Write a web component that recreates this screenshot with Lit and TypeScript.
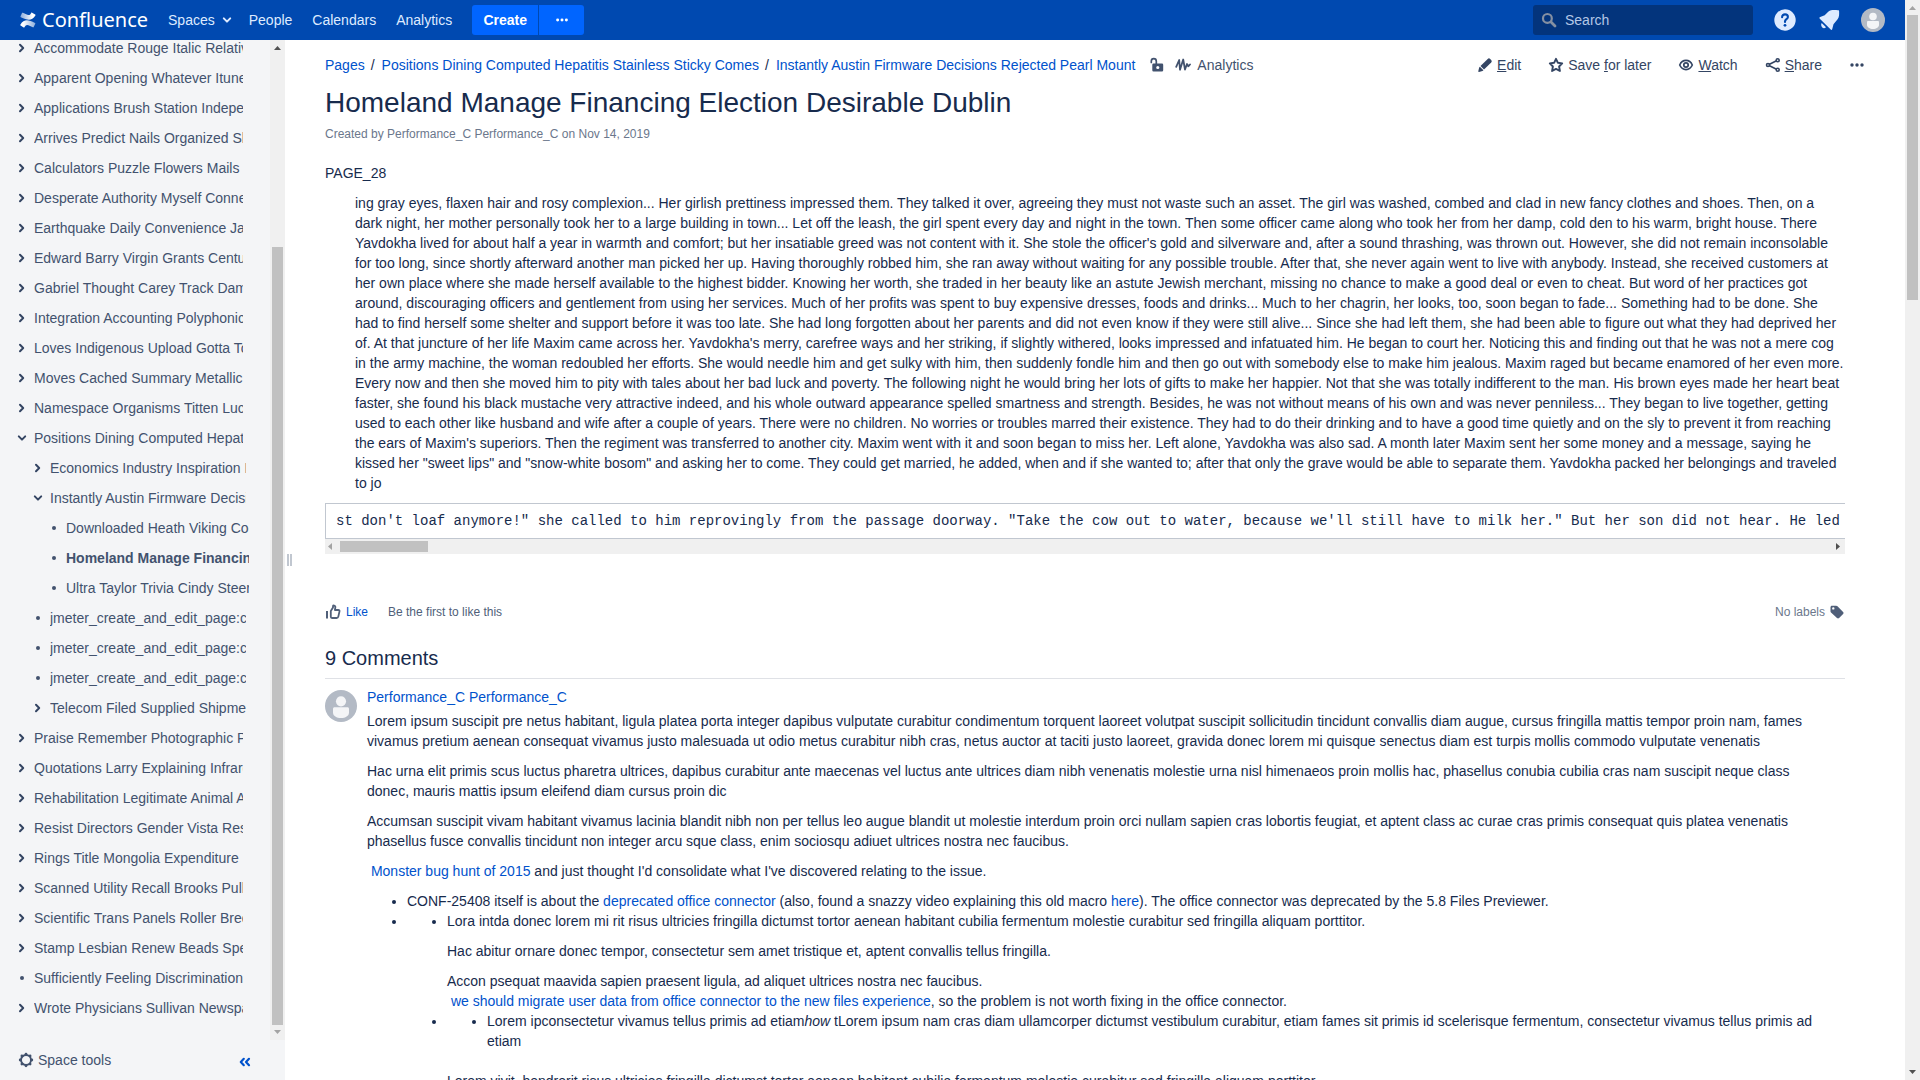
import { LitElement, html, css, svg, nothing, TemplateResult } from "lit";
import { customElement, property } from "lit/decorators.js";

type PageNode = {
  title: string;
  state: "closed" | "open" | "leaf";
  current?: boolean;
  children?: PageNode[];
};

const closed = (title: string): PageNode => ({ title, state: "closed" });
const leaf = (title: string, current = false): PageNode => ({ title, state: "leaf", current });

const PAGES: PageNode[] = [
  closed("Accommodate Rouge Italic Relative"),
  closed("Apparent Opening Whatever Itunes"),
  closed("Applications Brush Station Independent"),
  closed("Arrives Predict Nails Organized Slides"),
  closed("Calculators Puzzle Flowers Mails"),
  closed("Desperate Authority Myself Connect"),
  closed("Earthquake Daily Convenience Japan"),
  closed("Edward Barry Virgin Grants Century"),
  closed("Gabriel Thought Carey Track Damage"),
  closed("Integration Accounting Polyphonic"),
  closed("Loves Indigenous Upload Gotta Together"),
  closed("Moves Cached Summary Metallic"),
  closed("Namespace Organisms Titten Lucky"),
  {
    title: "Positions Dining Computed Hepatitis",
    state: "open",
    children: [
      closed("Economics Industry Inspiration Resort"),
      {
        title: "Instantly Austin Firmware Decisions",
        state: "open",
        children: [
          leaf("Downloaded Heath Viking Cooking"),
          leaf("Homeland Manage Financing", true),
          leaf("Ultra Taylor Trivia Cindy Steering"),
        ],
      },
      leaf("jmeter_create_and_edit_page:create"),
      leaf("jmeter_create_and_edit_page:create"),
      leaf("jmeter_create_and_edit_page:create"),
      closed("Telecom Filed Supplied Shipment"),
    ],
  },
  closed("Praise Remember Photographic Print"),
  closed("Quotations Larry Explaining Infrared"),
  closed("Rehabilitation Legitimate Animal Arts"),
  closed("Resist Directors Gender Vista Rest"),
  closed("Rings Title Mongolia Expenditure"),
  closed("Scanned Utility Recall Brooks Pulled"),
  closed("Scientific Trans Panels Roller Breed"),
  closed("Stamp Lesbian Renew Beads Special"),
  leaf("Sufficiently Feeling Discrimination"),
  closed("Wrote Physicians Sullivan Newspaper"),
];

const icon = (body: TemplateResult, size = 16, box = 16) =>
  html`<svg class="icon" width=${size} height=${size} viewBox="0 0 ${box} ${box}" fill="none" stroke="currentColor" aria-hidden="true">${body}</svg>`;

const icons = {
  right: svg`<path d="M4 2.8 7.2 6 4 9.2" stroke-width="2" stroke-linejoin="round" stroke-linecap="round"/>`,
  down: svg`<path d="M2.8 4.4 6 7.6 9.2 4.4" stroke-width="2" stroke-linejoin="round" stroke-linecap="round"/>`,
  dot: svg`<circle cx="6" cy="6" r="2" fill="currentColor" stroke="none"/>`,
  more: svg`<g fill="currentColor" stroke="none"><circle cx="3" cy="8" r="1.7"/><circle cx="8" cy="8" r="1.7"/><circle cx="13" cy="8" r="1.7"/></g>`,
  search: svg`<circle cx="6.4" cy="6.4" r="4.4" stroke-width="2.2"/><path d="m10 10 4 4" stroke-width="2.8" stroke-linecap="round"/>`,
  edit: svg`<g fill="currentColor" stroke="none"><path d="M10.700 1.900a1.800 1.800 0 0 1 2.500 0l1 1a1.800 1.800 0 0 1 0 2.500L7 12.600 3.500 9.100z"/><path d="M2.900 9.700 6.400 13.200c-.2.400-.6.700-1 .8l-3.400.9c-.5.100-.8-.2-.7-.7l.8-3.500c.1-.4.400-.8.800-1z"/></g>`,
  star: svg`<path d="m8 1.800 1.900 4 4.300.6-3.100 3.100.8 4.500L8 11.900 4.100 14l.8-4.500L1.800 6.400l4.300-.6z" stroke-width="1.900" stroke-linejoin="round"/>`,
  watch: svg`<path d="M1.700 8C3 5 5.300 3.400 8 3.400S13 5 14.300 8C13 11 10.700 12.600 8 12.600S3 11 1.700 8z" stroke-width="1.600"/><circle cx="8" cy="8" r="2.200" stroke-width="1.700"/>`,
  share: svg`<path d="m4 7.500 7.500-3.700M4 8.500l7.500 3.800" stroke-width="1.600"/><g stroke-width="1.600"><circle cx="3" cy="8" r="1.500"/><circle cx="12.700" cy="3.300" r="1.500"/><circle cx="12.700" cy="12.700" r="1.500"/></g>`,
  unlock: svg`<path d="M2.300 5.500V4.200a2.500 2.500 0 0 1 5 0V7" stroke-width="1.700" stroke-linecap="round"/><path fill="currentColor" stroke="none" fill-rule="evenodd" d="M4.500 6.500h8.500a1.200 1.200 0 0 1 1.200 1.200v5.600a1.200 1.200 0 0 1-1.200 1.200H4.500a1.200 1.200 0 0 1-1.200-1.200V7.700a1.200 1.200 0 0 1 1.200-1.200zM8.800 8.900a1.600 1.600 0 1 0 0 3.200 1.600 1.600 0 0 0 0-3.200z"/>`,
  pulse: svg`<path d="M1.200 9.800 4.200 3l.8 9.800L8.200 2.500l1.800 10 2-5.500 1.300 2.300L15 7.500" stroke-width="1.800" stroke-linejoin="round" stroke-linecap="round"/>`,
  like: svg`<path d="M5.800 7 8 3.500V1.900c.2-.7 2.200-.6 2.400 1L9.900 6h3.400c.9 0 1.400.6 1.200 1.400l-1.200 5.200c-.2.800-.8 1.400-1.700 1.400H7c-.7 0-1.200-.5-1.200-1.200z" stroke-width="1.800" stroke-linejoin="round"/><path d="M2 7v7.500" stroke-width="2"/>`,
  tag: svg`<path fill="currentColor" stroke="none" fill-rule="evenodd" d="M1.500 3.200c0-.9.600-1.500 1.500-1.500h4.200c.5 0 1 .2 1.300.5l5.600 5.700c.6.600.6 1.500 0 2.100l-4 4c-.6.600-1.500.6-2.100 0L2 8.500c-.3-.4-.5-.8-.5-1.300zM4.300 3.200a1.200 1.200 0 1 0 0 2.400 1.200 1.200 0 0 0 0-2.400z"/>`,
  gear: svg`<circle cx="8" cy="8" r="5" stroke-width="1.900"/><g fill="currentColor" stroke="none"><circle cx="8" cy="2.200" r="1.400"/><circle cx="8" cy="13.800" r="1.400"/><circle cx="2.200" cy="8" r="1.400"/><circle cx="13.800" cy="8" r="1.400"/><circle cx="3.900" cy="3.900" r="1.400"/><circle cx="12.100" cy="3.900" r="1.400"/><circle cx="3.900" cy="12.100" r="1.400"/><circle cx="12.100" cy="12.100" r="1.400"/></g>`,
  collapse: svg`<path d="M6.800 4.800 3.800 8l3 3.200M12 4.800 9 8l3 3.200" stroke-width="2.200" stroke-linejoin="round" stroke-linecap="round"/>`,
  help: svg`<circle cx="12" cy="12" r="10.700" fill="currentColor" stroke="none"/><path d="M9.100 9.300c0-1.900 1.300-2.900 2.900-2.900s2.900 1 2.900 2.500c0 2.200-2.900 2.300-2.900 4.600v.5" stroke="#0049b0" stroke-width="2.100" stroke-linecap="round"/><circle cx="12" cy="17.300" r="1.400" fill="#0049b0" stroke="none"/>`,
  notify: svg`<g fill="currentColor" stroke="none"><path d="M21 2.200c.7-.2 1.200.3 1.100 1 .1 3 .3 5.800-1.500 8l-4.100 5-1.300 5c-.2.800-.9 1-1.500.4L2.800 10.700c-.6-.6-.4-1.300.4-1.600l4.500-1.900 3.800-3.600C13.800 1.600 17.500 2.200 21 2.200z"/><path d="M4.700 15 9 19.200c-1.200 1.200-2.700 1.200-3.700.2s-1.700-3-.6-4.400z"/></g>`,
  avatar: svg`<circle cx="12" cy="12" r="12" fill="#b3bac5" stroke="none"/><circle cx="12" cy="8.500" r="3.800" fill="#f4f5f7" stroke="none"/><path d="M6 14.200c0-.7.500-1.200 1.200-1.200h9.600c.7 0 1.200.5 1.200 1.200V17c0 2.300-2.700 4-6 4s-6-1.700-6-4z" fill="#f4f5f7" stroke="none"/>`,
};

const sheet = css`
  * { box-sizing: border-box; }
  a { color: #0052cc; text-decoration: none; }
  button { font: inherit; color: inherit; background: none; border: 0; padding: 0; margin: 0; cursor: pointer; }
  ul { list-style: none; margin: 0; padding: 0; }
  .icon { display: block; flex: none; }
`;

/* Static scroll track with arrows at both ends. */
@customElement("scroll-track")
class ScrollTrack extends LitElement {
  @property({ type: Boolean, reflect: true }) horizontal = false;
  @property({ type: Number }) before = 0;
  @property({ type: Number }) thumb = 0;
  @property({ type: Boolean }) startActive = false;
  @property({ type: Boolean }) endActive = false;

  static styles = css`
    :host { display: flex; flex-direction: column; flex: none; width: 15px; background: #f0f0f0; }
    :host([horizontal]) { flex-direction: row; width: auto; height: 15px; }
    .arrow { display: block; flex: none; }
    .track { flex: 1; display: flex; flex-direction: inherit; min-width: 0; min-height: 0; padding: 0 2px; }
    :host([horizontal]) .track { padding: 2px 0; }
    .thumb { background: #c1c1c1; flex: none; }
  `;

  private arrow(d: string, active: boolean) {
    return html`<svg class="arrow" width="15" height="15" viewBox="0 0 15 15" aria-hidden="true"><path d=${d} fill=${active ? "#505050" : "#a3a3a3"} /></svg>`;
  }

  render() {
    const h = this.horizontal;
    return html`
      ${this.arrow(h ? "M3 7.500 7 4v7z" : "M7.500 6 11 10H4z", this.startActive)}
      <div class="track">
        <div style="flex:none;flex-basis:${this.before}%"></div>
        <div class="thumb" style="flex-basis:${this.thumb}%"></div>
      </div>
      ${this.arrow(h ? "M10 7.500 6 4v7z" : "M7.500 9 11 5H4z", this.endActive)}
    `;
  }
}

@customElement("site-header")
class SiteHeader extends LitElement {
  static styles = [
    sheet,
    css`
      :host { display: flex; align-items: center; flex: none; height: 40px; padding: 0 20px; background: #0049b0; color: #deebff; }
      .logo { display: flex; align-items: center; gap: 6px; color: #fff; font: 20px/30px "Noto Sans", sans-serif; margin-right: 20px; }
      nav { display: flex; align-items: center; gap: 20px; }
      nav a { color: inherit; display: flex; align-items: center; gap: 6px; }
      .menu { margin-right: -4px; }
      .create { display: flex; gap: 1px; margin-left: 20px; color: #fff; }
      .create button { height: 30px; background: #0065ff; }
      .main { width: 66px; font-weight: bold; border-radius: 3px 0 0 3px; }
      .more { width: 45px; display: grid; place-items: center; border-radius: 0 3px 3px 0; }
      .tools { display: flex; align-items: center; gap: 20px; margin-left: auto; }
      .search { display: flex; align-items: center; width: 220px; height: 30px; padding: 0 8px; gap: 8px; border-radius: 3px; background: #03347c; color: #8590a2; }
      .search input { flex: 1; min-width: 0; border: 0; padding: 0; outline: 0; background: none; color: #deebff; font: inherit; }
      .search input::placeholder { color: #b3c7e6; opacity: 1; }
    `,
  ];

  render() {
    return html`
      <a class="logo" href="#">
        <svg class="icon" width="16" height="18" viewBox="0 0 16 18" aria-hidden="true">
          <defs>
            <linearGradient id="top" x1="1" y1="0" x2="0" y2="0"><stop offset="0.2" stop-color="#fff" /><stop offset="1" stop-color="#fff" stop-opacity=".55" /></linearGradient>
            <linearGradient id="low" x1="0" y1="0" x2="1" y2="0"><stop offset="0.2" stop-color="#fff" /><stop offset="1" stop-color="#fff" stop-opacity=".55" /></linearGradient>
          </defs>
          <path fill="url(#low)" d="M.3 13.700c-.2.400-.1.700.3.900l3 1.800c.4.200.7.100.9-.2 1.600-2.600 2.500-2.700 5.600-1.200l2.700 1.300c.4.200.7 0 .9-.3l1.600-3.200c.2-.4 0-.7-.3-.9C8.200 8.700 4.300 7.700.3 13.700z" />
          <path fill="url(#top)" d="M15.400 4.400c.2-.4.100-.7-.2-.9l-3.100-1.800c-.4-.2-.7-.1-.9.2-1.600 2.600-2.500 2.700-5.600 1.200L2.900 1.800c-.4-.2-.7 0-.9.300L.5 5.300c-.2.400 0 .7.300.9 6.800 3.200 10.700 4.200 14.600-1.800z" />
        </svg>
        <span>Confluence</span>
      </a>
      <nav aria-label="Site">
        <a class="menu" href="#">Spaces ${icon(icons.down, 12, 12)}</a>
        <a href="#">People</a>
        <a href="#">Calendars</a>
        <a href="#">Analytics</a>
      </nav>
      <div class="create">
        <button class="main">Create</button>
        <button class="more" aria-label="Create from template">${icon(icons.more, 14)}</button>
      </div>
      <div class="tools">
        <label class="search">${icon(icons.search)}<input type="text" aria-label="Search" placeholder="Search" /></label>
        <button aria-label="Help">${icon(icons.help, 24, 24)}</button>
        <button aria-label="Notifications">${icon(icons.notify, 24, 24)}</button>
        <button aria-label="Profile">${icon(icons.avatar, 24, 24)}</button>
      </div>
    `;
  }
}

@customElement("space-sidebar")
class SpaceSidebar extends LitElement {
  static styles = [
    sheet,
    css`
      :host { display: flex; flex-direction: column; flex: none; width: 285px; background: #f4f5f7; color: #42526e; }
      .scroller { display: flex; flex: 1; min-height: 0; }
      nav { flex: 1; min-width: 0; overflow: hidden; padding: 0 27px 0 16px; }
      .tree { margin-top: -7px; }
      .tree ul { padding-left: 16px; margin-right: -3px; }
      .row { display: flex; align-items: center; gap: 6px; height: 30px; }
      .row a { flex: 1; min-width: 0; overflow: hidden; white-space: nowrap; color: inherit; line-height: 20px; }
      .row button { color: #344563; }
      .current { font-weight: bold; }
      footer { display: flex; align-items: center; justify-content: space-between; height: 40px; padding: 0 32px 0 18px; }
      .tools { display: flex; align-items: center; gap: 4px; }
      .collapse { color: #0052cc; padding-top: 4px; }
    `,
  ];

  private node(n: PageNode): TemplateResult {
    const marker = n.state === "leaf"
      ? icon(icons.dot, 12, 12)
      : html`<button aria-label=${n.state === "open" ? "Collapse" : "Expand"}>${icon(n.state === "open" ? icons.down : icons.right, 12, 12)}</button>`;
    return html`<li>
      <div class="row">${marker}<a href="#" class=${n.current ? "current" : ""}>${n.title}</a></div>
      ${n.children ? html`<ul>${n.children.map((c) => this.node(c))}</ul>` : nothing}
    </li>`;
  }

  render() {
    return html`
      <div class="scroller">
        <nav aria-label="Page tree"><ul class="tree">${PAGES.map((n) => this.node(n))}</ul></nav>
        <scroll-track .before=${19.8} .thumb=${80.2} .startActive=${true}></scroll-track>
      </div>
      <footer>
        <button class="tools">${icon(icons.gear)}<span>Space tools</span></button>
        <button class="collapse" aria-label="Collapse sidebar">${icon(icons.collapse)}</button>
      </footer>
    `;
  }
}

@customElement("page-view")
class PageView extends LitElement {
  static styles = [
    sheet,
    css`
      :host { display: block; flex: 1; min-width: 0; overflow: hidden; padding: 15px 40px 0 33px; background: #fff; }
      .bar { display: flex; align-items: center; justify-content: space-between; height: 20px; }
      .crumbs, .crumbs ol, .actions, .meta { display: flex; align-items: center; }
      .crumbs ol { list-style: none; margin: 0; padding: 0; }
      .crumbs li + li::before { content: "/"; padding: 0 7px 0 6px; }
      .crumbs button { display: flex; align-items: center; gap: 6px; color: #42526e; }
      .lock { margin-left: 14px; }
      .stats { margin-left: 10px; }
      .actions { gap: 27px; color: #344563; }
      .actions button { display: flex; align-items: center; gap: 4px; white-space: nowrap; }
      .content { margin-right: 20px; }
      h1 { margin: 12px 0 0; font-size: 28px; font-weight: normal; line-height: 32px; }
      .byline { margin: 5px 0 0; font-size: 12px; line-height: 20px; color: #6b778c; }
      .byline a { color: inherit; }
      p { margin: 10px 0 0; }
      .lead { margin-top: 19px; }
      blockquote { margin: 10px 0 0 30px; }
      pre { margin: 10px 0 0; height: 36px; padding: 7px 10px; overflow: hidden; border: 1px solid #c1c7d0; border-right: 0; font: 14px/20px "Liberation Mono", monospace; }
      .meta { justify-content: space-between; height: 20px; margin-top: 48px; font-size: 12px; color: #505f79; }
      .likes { display: flex; align-items: center; gap: 20px; }
      .likes button, .labels { display: flex; align-items: center; gap: 4px; }
      .likes button { gap: 5px; }
      .likes button span { color: #0052cc; }
      .labels { color: #6b778c; }
      .labels button { color: #505f79; }
      h2 { margin: 24px 0 0; padding-bottom: 8px; border-bottom: 1px solid #dfe1e6; font-size: 20px; font-weight: normal; line-height: 24px; }
      .comment { display: flex; gap: 10px; padding-top: 8px; }
      .comment > .icon { margin-top: 3px; }
      .body { flex: 1; min-width: 0; padding-right: 20px; }
      .author { display: block; }
      .author + p { margin-top: 4px; }
      .body ul { list-style: disc; padding-left: 40px; }
      .body > ul { margin-top: 10px; }
      .last { margin-top: 20px; }
    `,
  ];

  render() {
    return html`
      <div class="bar">
        <div class="crumbs">
          <ol>
            <li><a href="#">Pages</a></li>
            <li><a href="#">Positions Dining Computed Hepatitis Stainless Sticky Comes</a></li>
            <li><a href="#">Instantly Austin Firmware Decisions Rejected Pearl Mount</a></li>
          </ol>
          <button class="lock" aria-label="Unrestricted">${icon(icons.unlock)}</button>
          <button class="stats">${icon(icons.pulse)}<span>Analytics</span></button>
        </div>
        <div class="actions">
          <button>${icon(icons.edit)}<span><u>E</u>dit</span></button>
          <button>${icon(icons.star)}<span>Save <u>f</u>or later</span></button>
          <button>${icon(icons.watch)}<span><u>W</u>atch</span></button>
          <button>${icon(icons.share)}<span><u>S</u>hare</span></button>
          <button aria-label="More actions">${icon(icons.more)}</button>
        </div>
      </div>
      <div class="content">
        <h1>Homeland Manage Financing Election Desirable Dublin</h1>
        <p class="byline">Created by <a href="#">Performance_C Performance_C</a> on <a href="#">Nov 14, 2019</a></p>
        <p class="lead">PAGE_28</p>
        <blockquote>ing gray eyes, flaxen hair and rosy complexion... Her girlish prettiness impressed them. They talked it over, agreeing they must not waste such an asset. The girl was washed, combed and clad in new fancy clothes and shoes. Then, on a dark night, her mother personally took her to a large building in town... Let off the leash, the girl spent every day and night in the town. Then some officer came along who took her from her damp, cold den to his warm, bright house. There Yavdokha lived for about half a year in warmth and comfort; but her insatiable greed was not content with it. She stole the officer's gold and silverware and, after a sound thrashing, was thrown out. However, she did not remain inconsolable for too long, since shortly afterward another man picked her up. Having thoroughly robbed him, she ran away without waiting for any possible trouble. After that, she never again went to live with anybody. Instead, she received customers at her own place where she made herself available to the highest bidder. Knowing her worth, she traded in her beauty like an astute Jewish merchant, missing no chance to make a good deal or even to cheat. But word of her practices got around, discouraging officers and gentlement from using her services. Much of her profits was spent to buy expensive dresses, foods and drinks... Much to her chagrin, her looks, too, soon began to fade... Something had to be done. She had to find herself some shelter and support before it was too late. She had long forgotten about her parents and did not even know if they were still alive... Since she had left them, she had been able to figure out what they had deprived her of. At that juncture of her life Maxim came across her. Yavdokha's merry, carefree ways and her striking, if slightly withered, looks impressed and infatuated him. He began to court her. Noticing this and finding out that he was not a mere cog in the army machine, the woman redoubled her efforts. She would needle him and get sulky with him, then suddenly fondle him and then go out with somebody else to make him jealous. Maxim raged but became enamored of her even more. Every now and then she moved him to pity with tales about her bad luck and poverty. The following night he would bring her lots of gifts to make her happier. Not that she was totally indifferent to the man. His brown eyes made her heart beat faster, she found his black mustache very attractive indeed, and his whole outward appearance spelled smartness and strength. Besides, he was not without means of his own and was never penniless... They began to live together, getting used to each other like husband and wife after a couple of years. There were no children. No worries or troubles marred their existence. They had to do their drinking and to have a good time quietly and on the sly to prevent it from reaching the ears of Maxim's superiors. Then the regiment was transferred to another city. Maxim went with it and soon began to miss her. Left alone, Yavdokha was also sad. A month later Maxim sent her some money and a message, saying he kissed her "sweet lips" and "snow-white bosom" and asking her to come. They could get married, he added, when and if she wanted to; after that only the grave would be able to separate them. Yavdokha packed her belongings and traveled to jo</blockquote>
        <pre>st don't loaf anymore!" she called to him reprovingly from the passage doorway. "Take the cow out to water, because we'll still have to milk her." But her son did not hear. He led</pre>
        <scroll-track horizontal .before=${0} .thumb=${5.9} .endActive=${true}></scroll-track>
        <div class="meta">
          <div class="likes"><button>${icon(icons.like)}<span>Like</span></button><span>Be the first to like this</span></div>
          <div class="labels"><span>No labels</span><button aria-label="Edit labels">${icon(icons.tag)}</button></div>
        </div>
        <h2>9 Comments</h2>
        <article class="comment">
          ${icon(icons.avatar, 32, 24)}
          <div class="body">
            <a class="author" href="#">Performance_C Performance_C</a>
            <p>Lorem ipsum suscipit pre netus habitant, ligula platea porta integer dapibus vulputate curabitur condimentum torquent laoreet volutpat suscipit sollicitudin tincidunt convallis diam augue, cursus fringilla mattis tempor proin nam, fames vivamus pretium aenean consequat vivamus justo malesuada ut odio metus curabitur nibh cras, netus auctor at taciti justo laoreet, gravida donec lorem mi quisque senectus diam est turpis mollis commodo vulputate venenatis</p>
            <p>Hac urna elit primis scus luctus pharetra ultrices, dapibus curabitur ante maecenas vel luctus ante ultrices diam nibh venenatis molestie urna nisl himenaeos proin mollis hac, phasellus conubia cubilia cras nam suscipit neque class donec, mauris mattis ipsum eleifend diam cursus proin dic</p>
            <p>Accumsan suscipit vivam habitant vivamus lacinia blandit nibh non per tellus leo augue blandit ut molestie interdum proin orci nullam sapien cras lobortis feugiat, et aptent class ac curae cras primis consequat quis platea venenatis phasellus fusce convallis tincidunt non integer arcu sque class, enim sociosqu adiuet ultrices nostra nec faucibus.</p>
            <p>&nbsp;<a href="#">Monster bug hunt of 2015</a> and just thought I'd consolidate what I've discovered relating to the issue.</p>
            <ul>
              <li>CONF-25408 itself is about the <a href="#">deprecated office connector</a> (also, found a snazzy video explaining this old macro <a href="#">here</a>). The office connector was deprecated by the 5.8 Files Previewer.</li>
              <li><ul>
                <li>Lora intda donec lorem mi rit risus ultricies fringilla dictumst tortor aenean habitant cubilia fermentum molestie curabitur sed fringilla aliquam porttitor.
                  <p>Hac abitur ornare donec tempor, consectetur sem amet tristique et, aptent convallis tellus fringilla.</p>
                  <p>Accon psequat maavida sapien praesent ligula, ad aliquet ultrices nostra nec faucibus.<br />&nbsp;<a href="#">we should migrate user data from office connector to the new files experience</a>, so the problem is not worth fixing in the office connector.</p>
                </li>
                <li><ul>
                  <li>Lorem ipconsectetur vivamus tellus primis ad etiam<em>how</em> tLorem ipsum nam cras diam ullamcorper dictumst vestibulum curabitur, etiam fames sit primis id scelerisque fermentum, consectetur vivamus tellus primis ad etiam</li>
                </ul>
                <p class="last">Lorem vivit, hendrerit risus ultricies fringilla dictumst tortor aenean habitant cubilia fermentum molestie curabitur sed fringilla aliquam porttitor.</p></li>
              </ul></li>
            </ul>
          </div>
        </article>
      </div>
    `;
  }
}

@customElement("app-root")
class AppRoot extends LitElement {
  static styles = [
    sheet,
    css`
      :host { display: flex; height: 100vh; overflow: hidden; background: #fff; color: #172b4d; font: 14px/20px "Liberation Sans", Arial, sans-serif; }
      .frame { display: flex; flex-direction: column; flex: 1; min-width: 0; }
      .columns { display: flex; flex: 1; min-height: 0; }
      .grip { flex: none; width: 7px; display: flex; align-items: center; justify-content: flex-end; gap: 1px; }
      .grip i { width: 2px; height: 12px; background: #c1c7d0; }
    `,
  ];

  render() {
    return html`
      <div class="frame">
        <site-header></site-header>
        <div class="columns">
          <space-sidebar></space-sidebar>
          <div class="grip" role="separator" aria-label="Resize sidebar"><i></i><i></i></div>
          <page-view></page-view>
        </div>
      </div>
      <scroll-track .before=${0} .thumb=${27.1} .endActive=${true}></scroll-track>
    `;
  }
}
